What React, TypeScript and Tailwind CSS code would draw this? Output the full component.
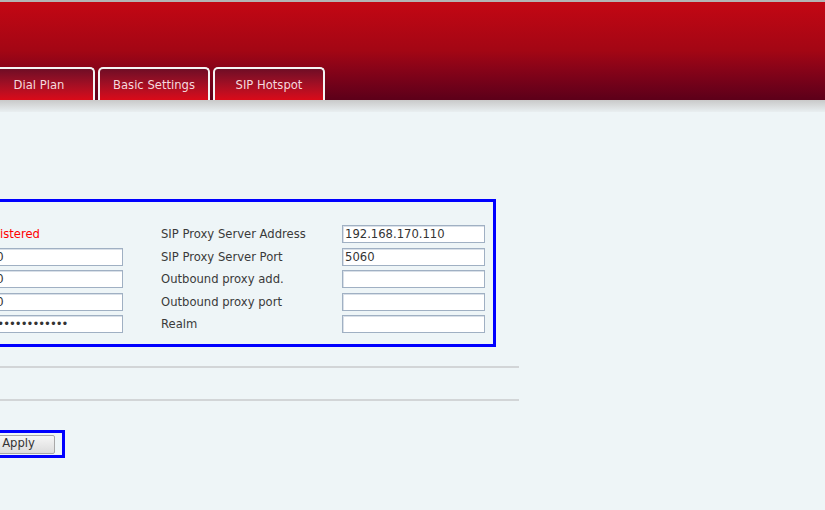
import React from "react";

const tabs = ["Dial Plan", "Basic Settings", "SIP Hotspot"];

const inputCls =
  "h-[18px] border border-[#a0b0c3] bg-white px-[2px] text-[11.6px] text-[#333] shadow-[inset_1px_1px_0_#d9e0e8] outline-none font-['DejaVu_Sans',sans-serif]";

type Row = {
  left: React.ReactNode;
  label: string;
  value: string;
};

const rows: Row[] = [
  {
    left: <span className="pl-[7px] text-[#ff0000]">Registered</span>,
    label: "SIP Proxy Server Address",
    value: "192.168.170.110",
  },
  {
    left: <input readOnly defaultValue="1000" className={`${inputCls} w-[152px] bg-[#fffbe6]`} />,
    label: "SIP Proxy Server Port",
    value: "5060",
  },
  {
    left: <input readOnly defaultValue="1000" className={`${inputCls} w-[152px]`} />,
    label: "Outbound proxy add.",
    value: "",
  },
  {
    left: <input readOnly defaultValue="1000" className={`${inputCls} w-[152px]`} />,
    label: "Outbound proxy port",
    value: "",
  },
  {
    left: (
      <input
        readOnly
        type="password"
        defaultValue="abcdefghijklmnop"
        className={`${inputCls} w-[152px] tracking-[-1px]`}
      />
    ),
    label: "Realm",
    value: "",
  },
];

export default function App() {
  return (
    <div className="w-[825px] h-[510px] overflow-hidden bg-[#eef5f7] font-['DejaVu_Sans',sans-serif] text-[11.6px] text-[#3a3a3a]">
      <header className="h-[100px] border-t-2 border-[#b4b4b4] bg-gradient-to-b from-[#c30713] via-[#a30614] to-[#5c0019] flex items-end">
        <nav className="flex gap-[3px] -ml-[17px]">
          {tabs.map((t) => (
            <div
              key={t}
              className="w-[112px] h-[33px] pt-[2px] rounded-t-[5px] border-2 border-b-0 border-[#f4f4f4] bg-gradient-to-b from-[#700d25] to-[#da0a18] text-[#f5d8de] flex items-center justify-center"
            >
              {t}
            </div>
          ))}
        </nav>
      </header>
      <div className="h-[12px] bg-gradient-to-b from-[#c9c9c9] to-[#e9eff1]" />

      <section className="mt-[87px] -ml-[200px] w-[696px] h-[148px] border-[3px] border-[#0000ff] pt-[21px]">
        {rows.map((r, i) => (
          <div key={i} className="flex items-center h-[22.5px]">
            <div className="w-[168px]" />
            <div className="w-[190px] flex items-center">{r.left}</div>
            <div className="w-[181px] pt-[1px]">{r.label}</div>
            <input readOnly defaultValue={r.value} className={`${inputCls} w-[143px]`} />
          </div>
        ))}
      </section>

      <div className="mt-[19px] w-[519px] h-[2px] bg-[#d2d5d7]" />
      <div className="mt-[31px] w-[519px] h-[2px] bg-[#d2d5d7]" />

      <div className="mt-[29px] -ml-[100px] w-[165px] h-[28px] border-[3px] border-[#0000ff] flex items-center justify-end pr-[7px]">
        <button className="w-[73px] h-[19px] rounded-[2px] border border-[#a8a8a8] bg-gradient-to-b from-[#f6f6f6] to-[#dcdcdc] text-[11.6px] text-[#333] leading-none font-['DejaVu_Sans',sans-serif]">
          Apply
        </button>
      </div>
    </div>
  );
}
